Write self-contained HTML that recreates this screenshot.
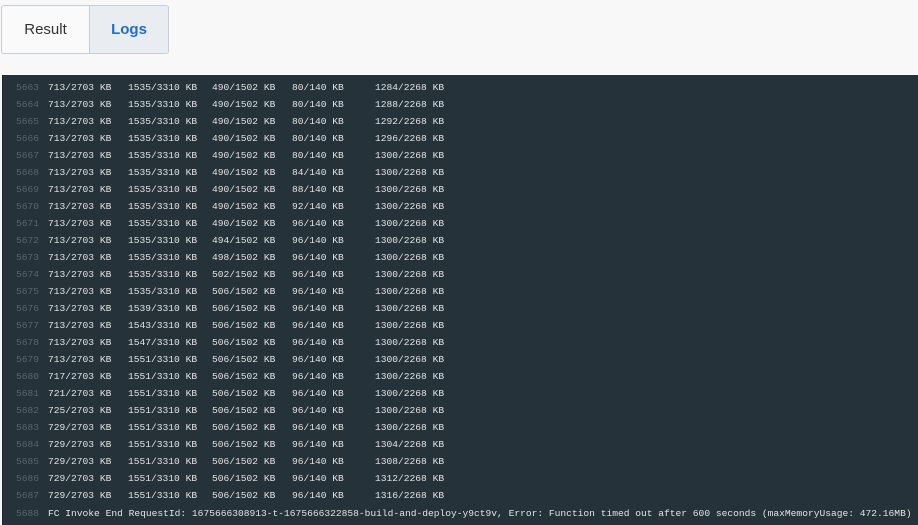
<!DOCTYPE html>
<html><head><meta charset="utf-8"><style>
body{margin:0;width:918px;height:525px;background:#f8f8f8;overflow:hidden;font-family:"Liberation Sans",sans-serif;position:relative}
.tabs{position:absolute;left:1px;top:5px;height:47px;display:flex;border:1px solid #c8cdd3;border-radius:3px;overflow:hidden;background:#fafafa}
.tabs div{display:flex;align-items:center;justify-content:center;font-size:15px}
.t1{width:87px;color:#333;border-right:1px solid #c8cdd3}
.t2{width:78px;color:#1f6fc5;font-weight:bold;background:#e9edf2}
.panel{position:absolute;left:2px;top:75px;width:916px;height:450px;background:#263239;border-left:1px solid #1c252b}
.r{position:absolute;height:17px;line-height:17px;font-family:"Liberation Mono",monospace;font-size:9.6px;color:#dfe3e6;white-space:pre}
.r span{position:absolute}
.n{left:13px;color:#56656e}
.a{left:45px}.b{left:125px}.c{left:209px}.d{left:289px}.e{left:372px}
</style></head><body>
<div class="tabs"><div class="t1">Result</div><div class="t2">Logs</div></div>
<div class="panel" id="p"></div>
<script>
var rows=[
[713,1535,490,80,1284],[713,1535,490,80,1288],[713,1535,490,80,1292],[713,1535,490,80,1296],[713,1535,490,80,1300],
[713,1535,490,84,1300],[713,1535,490,88,1300],[713,1535,490,92,1300],[713,1535,490,96,1300],[713,1535,494,96,1300],
[713,1535,498,96,1300],[713,1535,502,96,1300],[713,1535,506,96,1300],[713,1539,506,96,1300],[713,1543,506,96,1300],
[713,1547,506,96,1300],[713,1551,506,96,1300],[717,1551,506,96,1300],[721,1551,506,96,1300],[725,1551,506,96,1300],
[729,1551,506,96,1300],[729,1551,506,96,1304],[729,1551,506,96,1308],[729,1551,506,96,1312],[729,1551,506,96,1316]];
var h='';
for(var i=0;i<rows.length;i++){var r=rows[i];
h+='<div class="r" style="top:'+(3.5+i*17.04)+'px"><span class="n">'+(5663+i)+'</span><span class="a">'+r[0]+'/2703 KB</span><span class="b">'+r[1]+'/3310 KB</span><span class="c">'+r[2]+'/1502 KB</span><span class="d">'+r[3]+'/140 KB</span><span class="e">'+r[4]+'/2268 KB</span></div>';}
h+='<div class="r" style="top:'+(3.5+25*17.04)+'px"><span class="n">5688</span><span class="a">FC Invoke End RequestId: 1675666308913-t-1675666322858-build-and-deploy-y9ct9v, Error: Function timed out after 600 seconds (maxMemoryUsage: 472.16MB)</span></div>';
document.getElementById('p').innerHTML=h;
</script>
</body></html>
